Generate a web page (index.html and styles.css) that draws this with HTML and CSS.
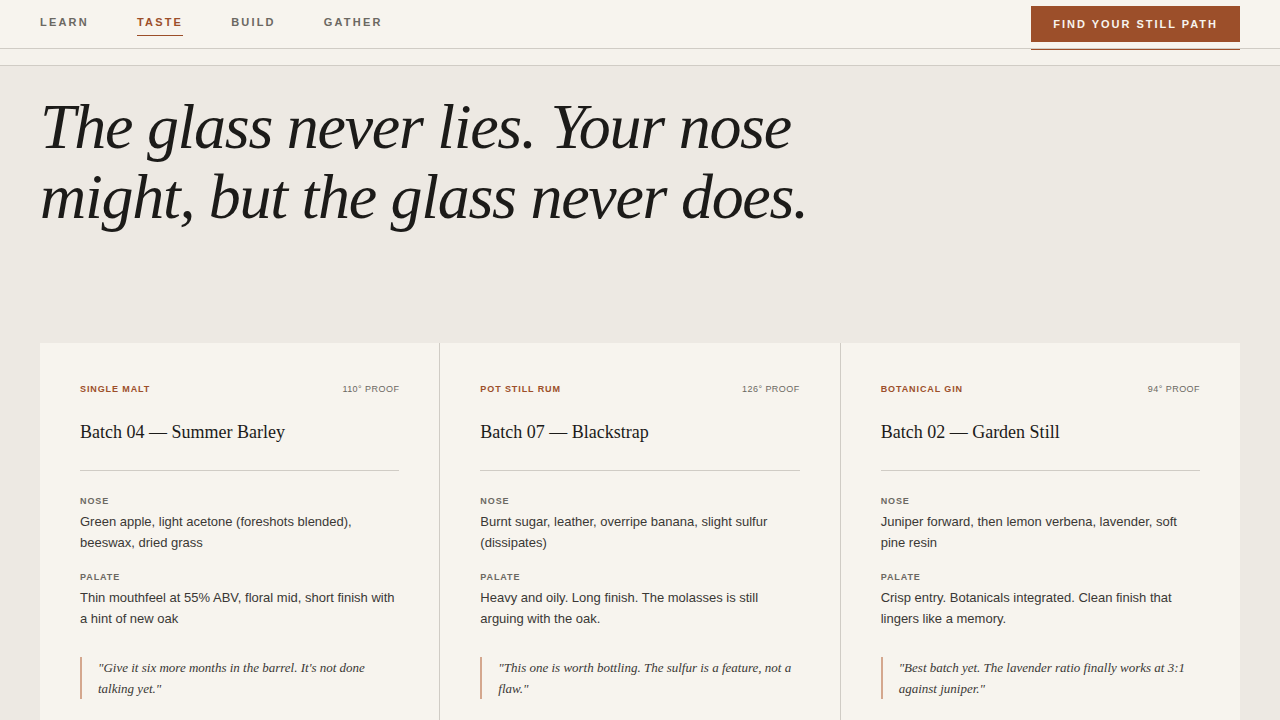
FILE: index.html
```html
<!DOCTYPE html>
<html lang="en">
<head>
<meta charset="utf-8">
<title>Taste</title>
<link rel="stylesheet" href="styles.css">
</head>
<body>
<header class="topbar">
  <nav class="nav">
    <a class="nav-link" href="#">LEARN</a>
    <a class="nav-link active" href="#">TASTE</a>
    <a class="nav-link" href="#">BUILD</a>
    <a class="nav-link" href="#">GATHER</a>
  </nav>
  <a class="cta" href="#">FIND YOUR STILL PATH</a>
</header>
<div class="strip"></div>
<main class="main">
  <h1 class="headline">The glass never lies. Your nose might, but the glass never does.</h1>
  <section class="cards">
    <article class="card">
      <div class="card-top"><span class="kind">SINGLE MALT</span><span class="proof">110° PROOF</span></div>
      <h2 class="batch">Batch 04 — Summer Barley</h2>
      <h3 class="label">NOSE</h3>
      <p class="note">Green apple, light acetone (foreshots blended), beeswax, dried grass</p>
      <h3 class="label">PALATE</h3>
      <p class="note">Thin mouthfeel at 55% ABV, floral mid, short finish with a hint of new oak</p>
      <blockquote class="quote">"Give it six more months in the barrel. It's not done talking yet."</blockquote>
    </article>
    <article class="card">
      <div class="card-top"><span class="kind">POT STILL RUM</span><span class="proof">126° PROOF</span></div>
      <h2 class="batch">Batch 07 — Blackstrap</h2>
      <h3 class="label">NOSE</h3>
      <p class="note">Burnt sugar, leather, overripe banana, slight sulfur (dissipates)</p>
      <h3 class="label">PALATE</h3>
      <p class="note">Heavy and oily. Long finish. The molasses is still arguing with the oak.</p>
      <blockquote class="quote">"This one is worth bottling. The sulfur is a feature, not a flaw."</blockquote>
    </article>
    <article class="card">
      <div class="card-top"><span class="kind">BOTANICAL GIN</span><span class="proof">94° PROOF</span></div>
      <h2 class="batch">Batch 02 — Garden Still</h2>
      <h3 class="label">NOSE</h3>
      <p class="note">Juniper forward, then lemon verbena, lavender, soft pine resin</p>
      <h3 class="label">PALATE</h3>
      <p class="note">Crisp entry. Botanicals integrated. Clean finish that lingers like a memory.</p>
      <blockquote class="quote">"Best batch yet. The lavender ratio finally works at 3:1 against juniper."</blockquote>
    </article>
  </section>
</main>
</body>
</html>
```
FILE: styles.css
```css
* { box-sizing: border-box; }
html, body { margin: 0; height: 720px; overflow: hidden; }
body { background: #ede9e3; color: #1c1b19; font-family: "Liberation Sans", Arial, sans-serif; }
a { text-decoration: none; }

.topbar {
  height: 49px;
  padding: 0 40px;
  display: flex;
  justify-content: space-between;
  align-items: flex-start;
  background: #f7f4ee;
  border-bottom: 1px solid #d0ccc5;
}
.nav { display: flex; gap: 48px; padding-top: 16px; }
.nav-link {
  font-size: 11px;
  font-weight: 700;
  line-height: 13px;
  letter-spacing: 2.2px;
  color: #6b6862;
  padding-bottom: 6px;
  border-bottom: 1px solid transparent;
}
.nav-link.active { color: #9c4f2a; border-bottom-color: #9c4f2a; }
.cta {
  position: relative;
  margin-top: 6px;
  height: 36px;
  padding: 0 22px;
  display: flex;
  align-items: center;
  background: #9c4f2a;
  color: #f7f4ee;
  font-size: 11px;
  font-weight: 700;
  letter-spacing: 1.98px;
}
.cta::after {
  content: "";
  position: absolute;
  left: 0;
  right: 0;
  top: 43px;
  height: 1px;
  background: #9c4f2a;
}
.strip {
  height: 17px;
  background: #f5f2ec;
  border-bottom: 1px solid #d0ccc5;
}
.main { padding: 26px 40px 0; }
.headline {
  margin: 0;
  max-width: 800px;
  font-family: "Liberation Serif", "Times New Roman", serif;
  font-style: italic;
  font-weight: 400;
  font-size: 64px;
  line-height: 70.4px;
  letter-spacing: -1.28px;
  color: #1c1b19;
}
.cards {
  margin-top: 110px;
  display: grid;
  grid-template-columns: repeat(3, 1fr);
  gap: 1px;
  background: #d0ccc5;
}
.card { background: #f7f4ee; padding: 40px; }
.card-top {
  display: flex;
  justify-content: space-between;
  align-items: center;
  height: 12px;
}
.kind { font-size: 9px; font-weight: 700; letter-spacing: 0.9px; color: #9c4f2a; }
.proof { font-size: 9px; letter-spacing: 0.45px; color: #6b6862; }
.batch {
  margin: 24px 0 0;
  padding-bottom: 24px;
  border-bottom: 1px solid #d0ccc5;
  font-family: "Liberation Serif", "Times New Roman", serif;
  font-weight: 400;
  font-size: 18px;
  line-height: 27px;
  color: #1c1b19;
}
.label {
  margin: 24px 0 4px;
  font-size: 9px;
  line-height: 12px;
  font-weight: 700;
  letter-spacing: 0.9px;
  color: #6b6862;
}
.note + .label { margin-top: 18px; }
.note {
  margin: 0;
  font-size: 13px;
  line-height: 21px;
  color: #3a3835;
}
.quote {
  margin: 28px 0 0;
  padding-left: 16px;
  border-left: 2px solid #d4a78e;
  font-family: "Liberation Serif", "Times New Roman", serif;
  font-style: italic;
  font-size: 13px;
  line-height: 21px;
  color: #3a3835;
}
```
